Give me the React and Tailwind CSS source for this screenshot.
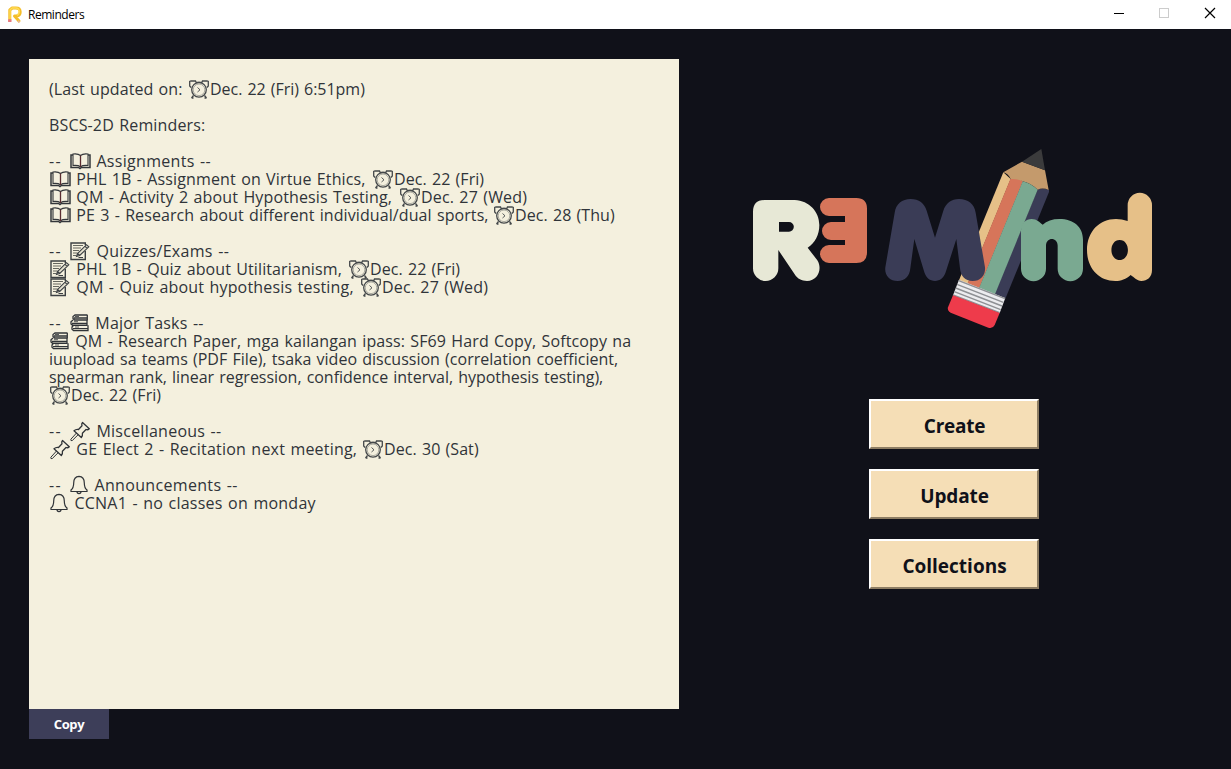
import React from "react";

const ICON = "block h-[18px] shrink-0 overflow-visible";

function Book() {
  return (
    <svg className={ICON + " w-[22px]"} viewBox="0 0 22 18" fill="none" stroke="#33373b">
      <path d="M4 3H2V15.500H9.500L11 16.500L12.500 15.500H21V3H19" strokeWidth="1.500" />
      <path d="M11.500 3.500C9.500 1.700 6.500 1.700 4 2V13.500C6.500 13.300 9.500 13.300 11.500 14.800C13.500 13.300 16.500 13.300 19 13.500V2C16.500 1.700 13.500 1.700 11.500 3.500Z" strokeWidth="1.100" />
      <path d="M11.500 3.500V15" stroke="#5a2c30" strokeWidth="1.300" />
    </svg>
  );
}

function Clock() {
  return (
    <svg className={ICON + " w-[22px]"} viewBox="0 0 22 18" fill="none" stroke="#44484a">
      <circle cx="11" cy="9.800" r="7.300" strokeWidth="1.300" />
      <circle cx="11" cy="9.800" r="5.800" stroke="#8b8c85" strokeWidth="0.700" />
      <path d="M3 7.500L1.700 6V1.500L3 1H7.500L8 2.300M19 7.500L20.300 6V1.500L19 1H14.500L14 2.300M8 2.300H14M5.500 15.500L3.500 18M16.500 15.500L18.500 18M3.500 18H5.500M18.500 18H16.500" strokeWidth="1.300" />
      <path d="M9.500 7.500L12 9.800L9.500 12" strokeWidth="0.900" />
    </svg>
  );
}

function Memo() {
  return (
    <svg className={ICON + " w-[22px]"} viewBox="0 0 22 18" fill="none" stroke="#3c4043">
      <path d="M16.300 3V1H2V17.500H16.300V9" strokeWidth="1.400" />
      <path d="M4 3.500H14M4 6H12M4 8.500H10M4 11H8.500M4 13.500H7" stroke="#66675f" strokeWidth="1.100" />
      <path d="M7.500 14.500L8.500 11.500L17.500 2.700L19.800 4.800L10.700 13.500L7.500 14.500ZM8.500 11.500L10.700 13.500M16 4.300L18.200 6.300" fill="#e5e1cf" strokeWidth="1.100" />
      <path d="M9.500 15.500H14" strokeWidth="1" />
    </svg>
  );
}

function Books() {
  return (
    <svg className={ICON + " w-[21px]"} viewBox="0 0 21 18" fill="none" stroke="#303438">
      <path d="M18.500 1H6L4 2.500V4.500L5.500 6H18.500M18.300 1V6M5 4H18" strokeWidth="1.300" />
      <path d="M18 6V11.300H3.500L2 10V7.700L4 6M3 9.500H17.500" strokeWidth="1.300" />
      <path d="M19 11.300V16.700H4.500L3 15.300V13L4.500 11.300M4 14.700H18.500" strokeWidth="1.300" />
      <path d="M6 2.500H10M5 7.700H9M6 13H10" strokeWidth="0.800" />
    </svg>
  );
}

function Pin() {
  return (
    <svg className={ICON + " w-[22px]"} viewBox="0 0 22 18" fill="none" stroke="#303438" strokeWidth="1.300" strokeLinejoin="round">
      <path d="M13.500 0.500C12.500 1.500 12.500 2.500 13 3.800L9.500 7.500C7.800 7.200 6.500 7.500 5 8.800L12.300 15.500C13.500 14 13.800 13 13.400 11.200L17 7.500C18.300 8 19.400 7.600 20.300 6.700L13.500 0.500Z" />
      <path d="M7.500 11L1.800 17.300L2 18.600L3.300 18.500L9.200 12.700" strokeWidth="1" />
    </svg>
  );
}

function Bell() {
  return (
    <svg className={ICON + " w-[20px]"} viewBox="0 0 20 18" fill="none" stroke="#303438" strokeWidth="1.200">
      <path d="M10 0.300C6 0.500 4.700 3.500 4.700 7C4.700 11 4 12.500 2 14V15.500H18V14C16 12.500 15.300 11 15.300 7C15.300 3.500 14 0.500 10 0.300Z" />
      <path d="M8 15.500C8 18.200 12 18.200 12 15.500" />
    </svg>
  );
}

const icons = { book: Book, clock: Clock, memo: Memo, books: Books, pin: Pin, bell: Bell };

const DASH = ["--", "w-[20px] tracking-[1.3px]"];
const DATE = "tracking-[0.06px]";

/* A row is a list of segments: an icon name, or [text, classes]. */
const rows = [
  [["(Last updated on:", "w-[139px] tracking-[0.09px]"], "clock", ["Dec. 22 (Fri) 6:51pm)", "tracking-[-0.03px]"]],
  [],
  [["BSCS-2D Reminders:", "tracking-[0.15px]"]],
  [],
  [DASH, "book", [" Assignments --", "tracking-[0.3px]"]],
  ["book", [" PHL 1B - Assignment on Virtue Ethics,", "w-[301px] tracking-[0.13px]"], "clock", ["Dec. 22 (Fri)", DATE]],
  ["book", [" QM - Activity 2 about Hypothesis Testing,", "w-[328px] tracking-[0.14px]"], "clock", ["Dec. 27 (Wed)", "tracking-[0.15px]"]],
  ["book", [" PE 3 - Research about different individual/dual sports,", "w-[422px] tracking-[0.09px]"], "clock", ["Dec. 28 (Thu)", DATE]],
  [],
  [DASH, "memo", [" Quizzes/Exams --", "tracking-[0.3px]"]],
  ["memo", [" PHL 1B - Quiz about Utilitarianism,", "w-[277px] tracking-[0.11px]"], "clock", ["Dec. 22 (Fri)", DATE]],
  ["memo", [" QM - Quiz about hypothesis testing,", "w-[289px] tracking-[0.18px]"], "clock", ["Dec. 27 (Wed)", "tracking-[0.15px]"]],
  [],
  [DASH, "books", [" Major Tasks --", "tracking-[0.2px]"]],
  ["books", [" QM - Research Paper, mga kailangan ipass: SF69 Hard Copy, Softcopy na", "tracking-[0.11px]"]],
  [["iuupload sa teams (PDF File), tsaka video discussion (correlation coefficient,", "tracking-[0.01px]"]],
  [["spearman rank, linear regression, confidence interval, hypothesis testing),", "tracking-[-0.03px]"]],
  ["clock", ["Dec. 22 (Fri)", DATE]],
  [],
  [DASH, "pin", [" Miscellaneous --", "tracking-[0.25px]"]],
  ["pin", [" GE Elect 2 - Recitation next meeting,", "w-[291px] tracking-[0.2px]"], "clock", ["Dec. 30 (Sat)", DATE]],
  [],
  [DASH, "bell", [" Announcements --", "tracking-[0.33px]"]],
  ["bell", [" CCNA1 - no classes on monday", "tracking-[0.24px]"]],
];

function Row({ segments }) {
  return (
    <div className="flex h-[18px] whitespace-pre">
      {segments.map((s, i) => {
        if (typeof s === "string") {
          const Icon = icons[s];
          return <Icon key={i} />;
        }
        return <span key={i} className={"shrink-0 " + s[1]}>{s[0]}</span>;
      })}
    </div>
  );
}

function Logo() {
  return (
    <svg className="block h-[200px] w-[420px]" viewBox="0 0 1260 600">
      <path fill="#e7e8d6" fillRule="evenodd" d="M39 215Q39 180 74 180H164C208 182 238 215 238 255C238 285 225 308 203 323L232 361C248 387 234 423 201 423C185 423 173 417 164 403L115 330V385A38 38 0 0 1 39 385ZM117 246V275H147A14.500 14.500 0 0 0 147 246Z" />
      <path fill="#d6755a" d="M267 174H349Q381 174 381 206V337Q381 369 349 369H267A27 27 0 0 1 267 315H315V300H273A27 27 0 0 1 273 246H315V228H267A27 27 0 0 1 267 174Z" />
      <path fill="#e6c088" d="M790 97L812 117L683 432L657 421Z" />
      <path fill="#d6755a" d="M811 117Q830 110 849 124L718 445L682 432Z" />
      <path fill="#3a3c56" d="M892 149Q908 141 927 150V156L797 474L764 461Z" />
      <path fill="#c49a6c" d="M790 97L846 65L915 91L926 150Q908 142 893 149Q872 130 848 124Q830 115 812 117Q806 102 790 97Z" />
      <path fill="#3b3b3c" d="M846 65L904 27L915 91Z" />
      <path fill="#7aa991" d="M848 124Q872 130 893 149L765 463L717 445Z" />
      <path fill="#3a3c56" d="M464 218C468 192 486 177 512 177C537 177 553 190 560 212L585 293L610 212C617 190 634 177 657 177C684 177 703 192 707 218L735 382C737 405 722 423 698 423C675 423 662 408 660 385L649 297L617 397C611 414 600 423 585 423C569 423 559 414 553 397L523 297L511 385C509 408 495 423 473 423C449 423 433 405 436 382Z" />
      <path fill="#7aa991" d="M843 272C844 250 857 237 875 237C891 237 898 247 908 254C920 243 937 237 958 237C1001 237 1029 261 1029 299V386A38 38 0 0 1 953 386V317C953 290 918 290 918 317V386A37.500 37.500 0 0 1 843 386Z" />
      <path fill="#e6c088" fillRule="evenodd" d="M1163 243V195A36.500 36.500 0 0 1 1236 195V390C1236 411 1222 423 1204 423C1190 422 1182 412 1172 405C1158 418 1143 423 1126 423C1075 423 1041 383 1041 330C1041 275 1078 237 1128 237Q1145 237 1163 243ZM1139 300C1106 300 1106 360 1139 360C1172 360 1172 300 1139 300Z" />
      <path fill="#ececef" d="M657 419L796 474L779 519L639 466Z" />
      <path stroke="#8e9094" strokeWidth="4.500" d="M656 422L795 476M651 433L790 487M647 444L786 498M643 455L782 509M639 465L779 518" />
      <path fill="#ee3b4b" d="M639 466L779 519L764 555Q758 567 745 563L632 518Q621 512 624 502Z" />
    </svg>
  );
}

const buttons = [
  ["Create", "tracking-[-0.25px]"],
  ["Update", "tracking-[-0.15px]"],
  ["Collections", ""],
];

export default function App() {
  return (
    <div className="flex h-[769px] w-[1231px] flex-col overflow-hidden bg-[#101119] font-['Open_Sans','Noto_Sans',sans-serif]">
      <header className="flex h-[29px] shrink-0 items-center bg-white text-black">
        <svg className="ml-[7px] h-[18px] w-[16px]" viewBox="0 0 16 18" fill="none">
          <path d="M2.800 14V4L5.200 2H9C14.500 2 14.500 9.500 9.500 10H7.500L12 15" stroke="#f4bd28" strokeWidth="3" strokeLinecap="round" strokeLinejoin="round" />
          <path d="M3 13V4L5.200 2H9C13 2 13.500 8 10 9.300" stroke="#ffdc55" strokeWidth="1.300" />
          <path d="M1.100 13.300H4.500V16H1.100Z" fill="#e7787e" />
          <path d="M11 14.800L12.500 16.300" stroke="#e9b897" strokeWidth="2" />
        </svg>
        <h1 className="ml-[5px] text-[12px] tracking-[-0.46px]">Reminders</h1>
        <svg className="ml-auto h-[29px] w-[138px]" viewBox="0 0 138 29" fill="none" shapeRendering="crispEdges">
          <path d="M21 13.500H31" stroke="#000" />
          <rect x="66.500" y="8.500" width="9" height="9" stroke="#ccc" />
          <path d="M112 8L122 18M122 8L112 18" stroke="#000" shapeRendering="auto" strokeWidth="1.200" />
        </svg>
      </header>
      <main className="flex grow">
        <section className="ml-[29px] mt-[30px] flex w-[650px] flex-col items-start">
          <div className="h-[650px] w-[650px] bg-[#f4f0de] pl-[20px] pt-[21px] text-[16px] leading-[18px] text-[#303439] [word-spacing:1px]">
            {rows.map((r, i) => <Row key={i} segments={r} />)}
          </div>
          <button className="h-[30px] w-[80px] bg-[#3d3e59] pt-[2px] text-[13px] font-bold tracking-[-0.4px] text-white">Copy</button>
        </section>
        <aside className="ml-[61px] mt-[111px] flex w-[420px] flex-col">
          <Logo />
          <div className="ml-[129px] mt-[59px] flex w-[170px] flex-col gap-[20px]">
            {buttons.map(([label, cls]) => (
              <button key={label} className={"h-[50px] border-2 border-b-[#8d7d63] border-l-white border-r-[#8d7d63] border-t-white bg-[#f5deb6] pt-[4px] pl-[1px] text-[19px] font-bold leading-[24px] text-[#101119] " + cls}>{label}</button>
            ))}
          </div>
        </aside>
      </main>
    </div>
  );
}
